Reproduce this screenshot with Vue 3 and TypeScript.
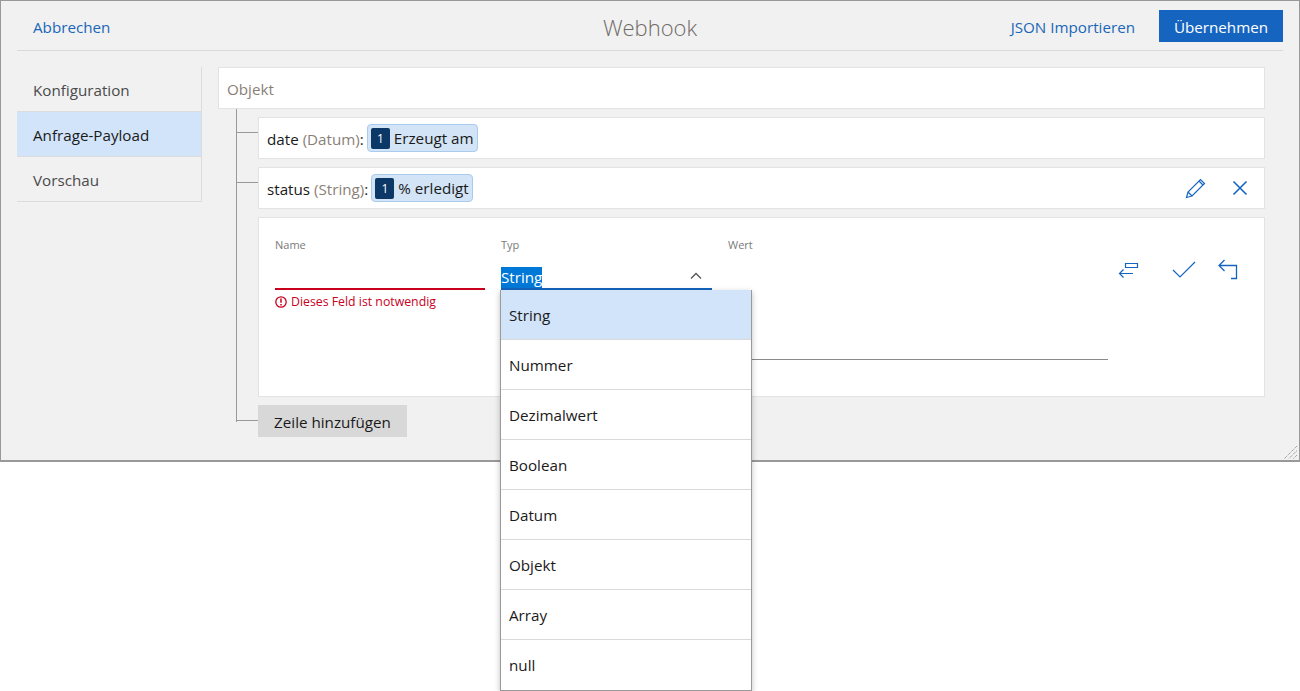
<script setup lang="ts">
const options: string[] = ['String', 'Nummer', 'Dezimalwert', 'Boolean', 'Datum', 'Objekt', 'Array', 'null']
</script>

<template>
  <div class="page">
    <div class="window">
      <header class="head">
        <a class="link">Abbrechen</a>
        <h1 class="title">Webhook</h1>
        <div class="head-right">
          <a class="link json">JSON Importieren</a>
          <button class="apply">Übernehmen</button>
        </div>
      </header>
      <div class="body">
        <nav class="side">
          <div class="tab">Konfiguration</div>
          <div class="tab active">Anfrage-Payload</div>
          <div class="tab">Vorschau</div>
        </nav>
        <main class="tree">
          <div class="card root"><span class="muted">Objekt</span></div>
          <div class="children">
            <div class="row-wrap">
              <div class="card row">
                <span class="label">date <span class="muted">(Datum)</span>:</span>
                <span class="chip"><b class="num">1</b>Erzeugt am</span>
              </div>
            </div>
            <div class="row-wrap">
              <div class="card row">
                <span class="label">status <span class="muted">(String)</span>:</span>
                <span class="chip"><b class="num">1</b>% erledigt</span>
                <span class="row-actions">
                  <svg class="ic" width="24" height="24" viewBox="0 0 24 24" fill="none" stroke="#1565c0" stroke-width="1.2">
                    <path d="M2.500 21.500l1.500-5.500L16.500 3.500l4 4L8 20l-5.500 1.500zM4 16l4 4M15 5l4 4" />
                  </svg>
                  <svg class="ic" width="18" height="18" viewBox="0 0 18 18" fill="none" stroke="#1565c0" stroke-width="1.6">
                    <path d="M2.500 2.500l13 13M15.500 2.500l-13 13" />
                  </svg>
                </span>
              </div>
            </div>
            <div class="card form">
              <div class="field name">
                <label>Name</label>
                <div class="control bad"></div>
                <div class="error">
                  <svg width="12" height="12" viewBox="0 0 12 12" fill="none" stroke="#c8001e" stroke-width="1.3">
                    <circle cx="6" cy="6" r="5.200" />
                    <path d="M6 2.600v4.200M6 8v1.500" stroke-width="1.500" />
                  </svg>
                  Dieses Feld ist notwendig
                </div>
              </div>
              <div class="field type">
                <label>Typ</label>
                <div class="control open">
                  <span class="sel">String</span>
                  <svg class="chev" width="12" height="8" viewBox="0 0 12 8" fill="none" stroke="#555" stroke-width="1.3">
                    <path d="M1 6.500l5-5 5 5" />
                  </svg>
                </div>
                <ul class="menu">
                  <li v-for="(o, i) in options" :key="o" :class="{ cur: i === 0 }">{{ o }}</li>
                </ul>
              </div>
              <div class="field value">
                <label>Wert</label>
                <div class="area"></div>
              </div>
              <div class="form-actions">
                <svg class="a1" width="24" height="20" viewBox="0 0 24 20" fill="none" stroke="#1565c0" stroke-width="1.2">
                  <path d="M8.500 3.500h12v4h-12zM16 13.500H2.500M6.500 9.500l-4 4 4 4" />
                </svg>
                <svg class="a2" width="26" height="20" viewBox="0 0 26 20" fill="none" stroke="#1565c0" stroke-width="1.2">
                  <path d="M2 10l7 7L24 2" />
                </svg>
                <svg class="a3" width="24" height="24" viewBox="0 0 24 24" fill="none" stroke="#1565c0" stroke-width="1.3">
                  <path d="M7.500 2L2 7.500l5.500 5.500M2 7.500h17.500v13H14" />
                </svg>
              </div>
            </div>
            <div class="row-wrap last">
              <button class="add">Zeile hinzufügen</button>
            </div>
          </div>
        </main>
      </div>
      <svg class="grip" width="13" height="13" viewBox="0 0 13 13" fill="none" stroke="#808080" stroke-width="1" stroke-dasharray="1 1">
        <path d="M13 0L0 13M13 4.500L4.500 13M13 9L9 13" />
      </svg>
    </div>
  </div>
</template>

<style>
html, body { margin: 0; background: #fff; }
</style>

<style scoped>
.page { height: 691px; overflow: visible; }
.window {
  position: relative;
  box-sizing: border-box;
  width: 1300px;
  height: 462px;
  border: 1px solid #999;
  border-bottom-width: 2px;
  background: #f1f1f1;
  padding: 0 16px;
  font-family: "Open Sans", "Noto Sans", sans-serif;
  font-size: 15.2px;
  color: #1a1a1a;
}
.head {
  display: flex;
  align-items: center;
  justify-content: space-between;
  height: 49px;
  border-bottom: 1px solid #d9d9d9;
  position: relative;
  padding-left: 16px;
}
.link { color: #1a67b8; padding-top: 3px; }
.title {
  position: absolute;
  left: 0; right: 0;
  padding-top: 3px;
  text-align: center;
  margin: 0;
  font-weight: 300;
  font-size: 22px;
  color: #6f6a66;
  pointer-events: none;
}
.head-right { display: flex; align-items: center; gap: 24px; }
.apply {
  width: 124px;
  height: 32px;
  border: 0;
  background: #1565c0;
  color: #fff;
  font: inherit;
  padding: 2px 0 0;
}
.body { display: flex; padding-top: 16px; }
.side {
  width: 184px;
  height: 135px;
  border-right: 1px solid #dcdcdc;
  flex: none;
  color: #4a4a4a;
}
.tab {
  height: 44px;
  line-height: 47px;
  padding-left: 16px;
  border-bottom: 1px solid #dcdcdc;
}
.tab.active { background: #d2e4f9; color: #1a1a1a; }
.tree { margin-left: 16px; width: 1047px; flex: none; }
.card {
  box-sizing: border-box;
  background: #fff;
  border: 1px solid #e3e3e3;
}
.root { height: 42px; line-height: 43px; padding-left: 8px; }
.muted { color: #8a7f78; }
.children {
  margin-left: 18px;
  padding-left: 21px;
  border-left: 1px solid #999;
  padding-top: 8px;
  display: flex;
  flex-direction: column;
  gap: 8px;
  height: 313px;
  box-sizing: border-box;
  position: relative;
}
.children > * { flex: none; }
.row-wrap { position: relative; }
.row-wrap::before {
  content: "";
  position: absolute;
  left: -21px;
  top: 15px;
  width: 21px;
  border-top: 1px solid #999;
}
.row {
  height: 42px;
  display: flex;
  align-items: center;
  gap: 3px;
  padding-left: 8px;
  padding-right: 14px;
}
.label { padding-top: 1px; }
.chip {
  display: inline-flex;
  align-items: center;
  height: 28px;
  box-sizing: border-box;
  background: #d2e4f5;
  border: 1px solid #a9cbee;
  border-radius: 4px;
  padding: 0 3px;
  gap: 4px;
}
.num {
  width: 19px;
  height: 21px;
  line-height: 21px;
  border-radius: 2px;
  background: #0c3868;
  color: #fff;
  text-align: center;
  font-weight: 400;
  font-size: 12px;
}
.row-actions {
  margin-left: auto;
  display: flex;
  align-items: center;
  gap: 23px;
  padding-right: 1px;
}
.form {
  height: 180px;
  position: relative;
  display: flex;
  padding: 19px 16px 0;
  gap: 16px;
}
.field { position: relative; flex: none; }
.field label {
  display: block;
  font-size: 11px;
  line-height: 15px;
  color: #7a7a7a;
}
.name { width: 210px; }
.type { width: 211px; }
.value { width: 380px; }
.control {
  height: 30px;
  margin-top: 8px;
  box-sizing: border-box;
  border-bottom: 2px solid #1565c0;
  position: relative;
}
.control.bad { border-color: #c8001e; }
.sel {
  position: absolute;
  left: 0;
  bottom: 0;
  height: 21px;
  line-height: 21px;
  background: #0078d7;
  color: #fff;
}
.chev { position: absolute; right: 10px; top: 12px; }
.error {
  display: flex;
  align-items: center;
  gap: 4px;
  margin-top: 3px;
  font-size: 12.3px;
  color: #c8001e;
}
.menu {
  position: absolute;
  z-index: 5;
  left: -1px;
  top: 53px;
  width: 252px;
  margin: 0;
  padding: 0;
  list-style: none;
  box-sizing: border-box;
  background: #fff;
  border: 1px solid #999;
  border-top: 0;
  box-shadow: 0 2px 6px rgba(0, 0, 0, .25);
}
.menu li {
  height: 50px;
  line-height: 50px;
  box-sizing: border-box;
  padding-left: 8px;
  border-bottom: 1px solid #d9d9d9;
}
.menu li:last-child { border-bottom: 0; }
.menu li.cur { background: #d2e4f9; }
.area {
  margin-top: 8px;
  height: 100px;
  box-sizing: border-box;
  border-bottom: 1px solid #8a8a8a;
}
.form-actions {
  position: absolute;
  left: 858px;
  top: 40px;
  display: flex;
  align-items: flex-start;
}
.a1, .a2 { margin-top: 2px; }
.a2 { margin-left: 30px; }
.a3 { margin-left: 20px; }
.add {
  display: block;
  width: 149px;
  height: 32px;
  border: 0;
  background: #d8d8d8;
  color: #1a1a1a;
  font: inherit;
  padding: 2px 0 0;
}
.grip {
  position: absolute;
  right: 2px;
  bottom: 1px;
}
</style>
